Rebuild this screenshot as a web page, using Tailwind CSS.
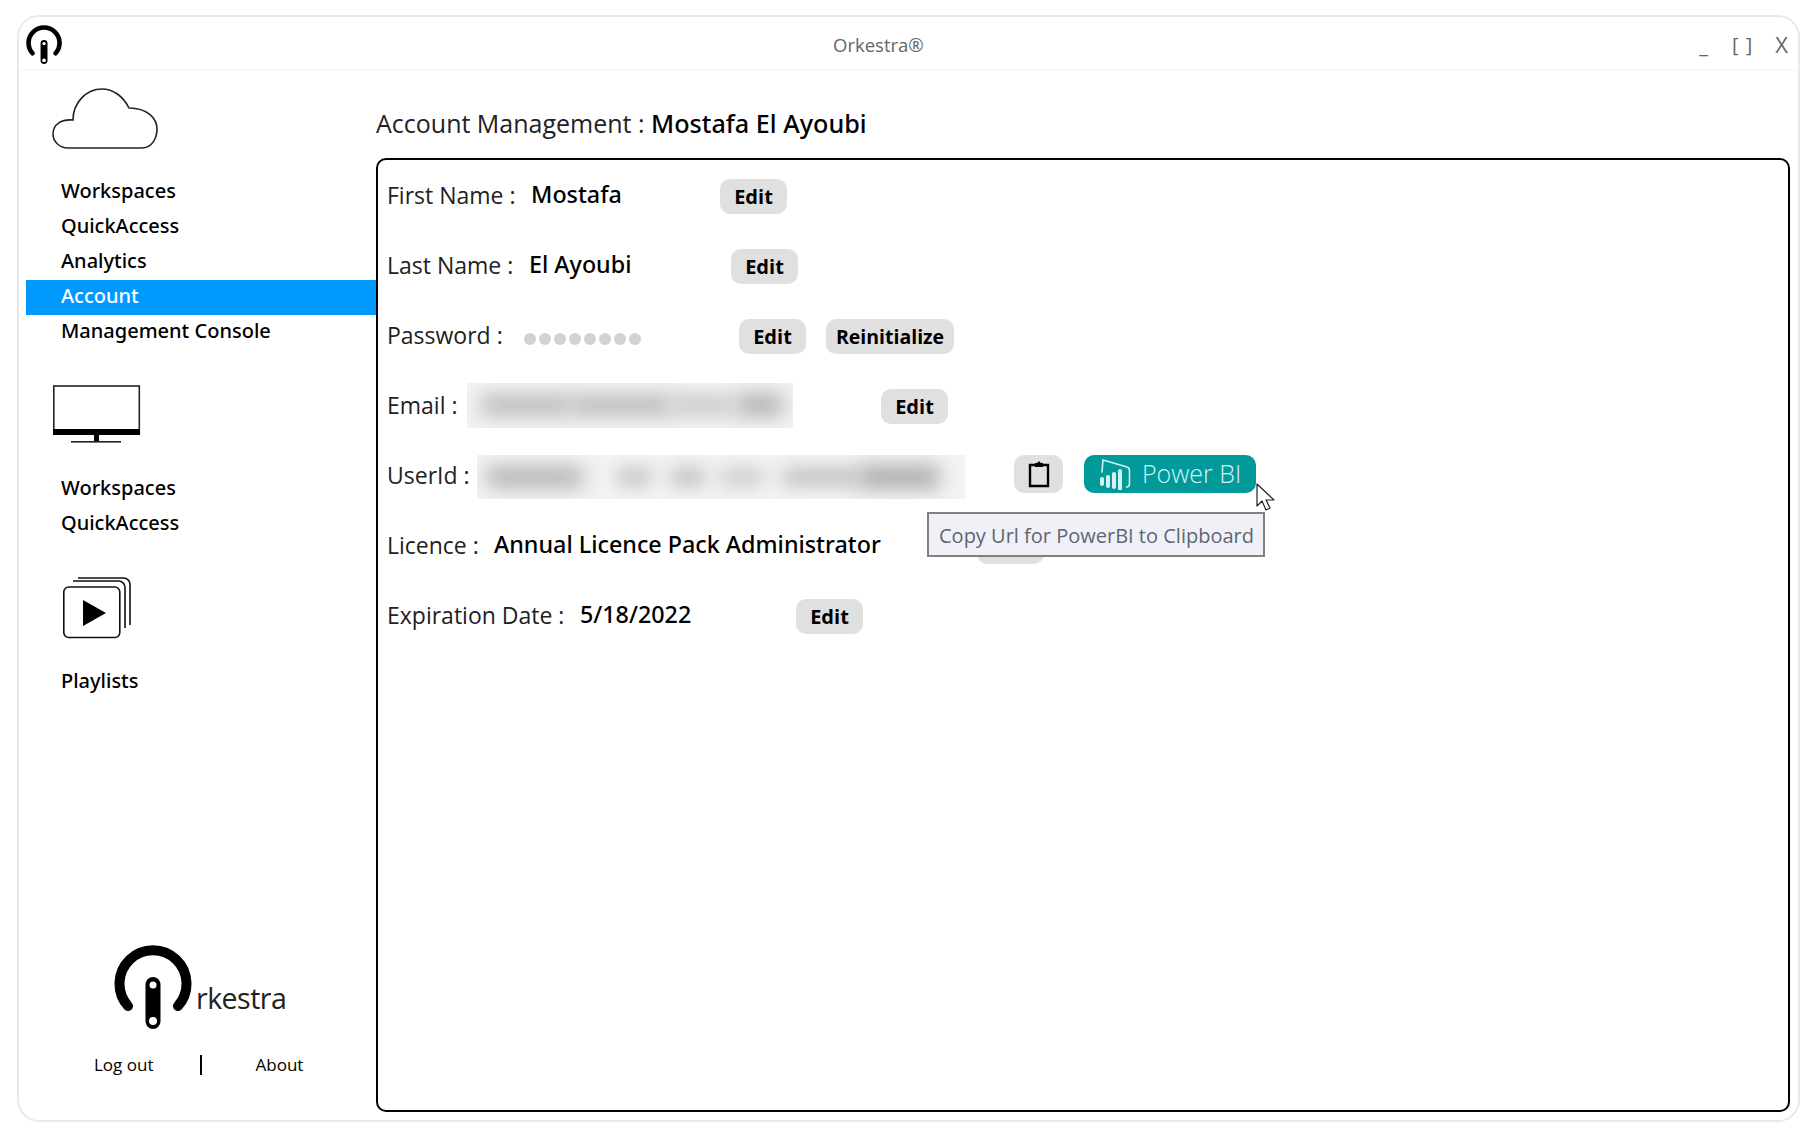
<!DOCTYPE html>
<html lang="en">
<head>
  <meta charset="UTF-8" />
  <title>Orkestra</title>
  <script src="https://cdn.jsdelivr.net/npm/@tailwindcss/browser@4"></script>
</head>
<body class="bg-white text-black font-['Open_Sans',sans-serif] overflow-hidden">

  <div class="w-[1816px] h-[1138px] pt-[15px] pl-[17px]">
    <!-- Window -->
    <div class="w-[1783px] h-[1107px] border-2 border-[#e9e9e9] rounded-[22px] flex flex-col bg-white">

      <!-- Title bar -->
      <div class="h-[54px] shrink-0 border-b-2 border-[#f9f9f9] flex items-center pl-[7px] relative">
        <svg class="w-[37px] h-[40px] mt-[3px]" viewBox="0 0 80 86">
          <path d="M14 61A33.5 33.5 0 1 1 64 61" fill="none" stroke="#000" stroke-width="10" stroke-linecap="round"/>
          <rect x="31.5" y="32" width="15" height="52" rx="7.5" fill="#000"/>
          <circle cx="39" cy="40" r="3.5" fill="#fff"/>
          <circle cx="39" cy="76" r="4" fill="#fff"/>
        </svg>
        <span class="ml-[770px] mt-[4px] text-[18.5px] text-[#666]">Orkestra®</span>
        <div class="ml-auto mr-[10px] mt-[3px] flex items-center text-[#666]">
          <span class="text-[20px] mr-[24px] mt-[2px]">_</span>
          <span class="text-[20px] mr-[22px] tracking-[1px]">[ ]</span>
          <span class="text-[22px]">X</span>
        </div>
      </div>

      <div class="flex flex-1 pl-[7px] min-h-0">
        <!-- Sidebar -->
        <aside class="w-[350px] shrink-0 flex flex-col text-[20px] font-['Noto_Sans',sans-serif] font-medium">
          <svg class="w-[110px] h-[66px] ml-[24px] mt-[15px] shrink-0" viewBox="0 0 110 66">
            <path d="M26 62H92C102 62 107 52 107 43C107 32 97 22 79 22C73 10 63 3 52 3C36 3 23 17 23 34C12 33 3 38 3 48C3 56 10 62 18 62Z" fill="none" stroke="#222" stroke-width="1.6"/>
          </svg>
          <nav class="mt-[23px] flex flex-col">
            <a class="h-[35px] flex items-center pl-[35px] pb-[4px]">Workspaces</a>
            <a class="h-[35px] flex items-center pl-[35px] pb-[4px]">QuickAccess</a>
            <a class="h-[35px] flex items-center pl-[35px] pb-[4px]">Analytics</a>
            <a class="h-[35px] flex items-center pl-[35px] pb-[4px] bg-[#0099ff] text-white">Account</a>
            <a class="h-[35px] flex items-center pl-[35px] pb-[4px]">Management Console</a>
          </nav>

          <svg class="w-[90px] h-[60px] ml-[26px] mt-[35px] shrink-0" viewBox="0 0 90 60">
            <rect x="1.8" y="1" width="85.5" height="48" fill="none" stroke="#222" stroke-width="1.6"/>
            <rect x="1" y="44" width="87" height="6" fill="#000"/>
            <rect x="42" y="50" width="5" height="6" fill="#000"/>
            <rect x="19" y="56" width="50" height="1.6" fill="#222"/>
          </svg>
          <nav class="mt-[26px] flex flex-col">
            <a class="h-[35px] flex items-center pl-[35px] pb-[2px]">Workspaces</a>
            <a class="h-[35px] flex items-center pl-[35px] pb-[2px]">QuickAccess</a>
          </nav>

          <svg class="w-[70px] h-[64px] ml-[36px] mt-[35px] shrink-0" viewBox="0 0 70 64">
            <rect x="1.8" y="11" width="56" height="50.5" rx="5" fill="none" stroke="#111" stroke-width="1.6"/>
            <path d="M11 5H57C60 5 63 8 63 11V52" fill="none" stroke="#111" stroke-width="1.6"/>
            <path d="M16 2H62C65 2 68 5 68 8V49" fill="none" stroke="#111" stroke-width="1.6"/>
            <path d="M21 24V50L44 37Z" fill="#000"/>
          </svg>
          <a class="h-[35px] flex items-center pl-[35px] pb-[2px] mt-[24px]">Playlists</a>

          <!-- Logo + footer links -->
          <div class="mt-auto mb-[41px] flex flex-col font-['Open_Sans',sans-serif] font-normal">
            <div class="flex items-end pl-[88px]">
              <svg class="w-[80px] h-[86px] shrink-0" viewBox="0 0 80 86">
                <path d="M14 61A33.5 33.5 0 1 1 64 61" fill="none" stroke="#000" stroke-width="10" stroke-linecap="round"/>
                <rect x="31.5" y="32" width="15" height="52" rx="7.5" fill="#000"/>
                <circle cx="39" cy="40" r="3.5" fill="#fff"/>
                <circle cx="39" cy="76" r="4" fill="#fff"/>
              </svg>
              <span class="text-[28.5px] leading-[38px] mb-[14px] ml-[2px] text-[#222] tracking-[-0.5px]">rkestra</span>
            </div>
            <div class="flex items-center mt-[20px] text-[17px] h-[28px]">
              <span class="ml-[68px] w-[106px]">Log out</span>
              <span class="w-[1.5px] h-[20px] bg-black"></span>
              <span class="ml-[54px]">About</span>
            </div>
          </div>
        </aside>

        <!-- Main -->
        <main class="flex-1 flex flex-col pr-[8px] min-w-0 mb-[8px]">
          <h1 class="h-[87px] shrink-0 flex items-center text-[25px] font-normal text-[#222] pt-[18px]">
            Account Management :&nbsp;<span class="text-black text-[25.2px] font-medium font-['Noto_Sans',sans-serif]">Mostafa El Ayoubi</span>
          </h1>

          <div class="flex-1 border-2 border-black rounded-[10px] relative text-[23px] pl-[9px] pt-px text-[#222]">
            <!-- First name -->
            <div class="h-[70px] flex items-center">
              <span class="w-[144px] -mt-[1px]">First Name :</span>
              <span class="w-[189px] -mt-[3px] text-[23.3px] text-black font-medium font-['Noto_Sans',sans-serif]">Mostafa</span>
              <button class="w-[67px] h-[35px] pt-[2px] rounded-[10px] bg-[#e0e0e0] text-[20px] font-bold text-black">Edit</button>
            </div>
            <!-- Last name -->
            <div class="h-[70px] flex items-center">
              <span class="w-[142px] -mt-[1px]">Last Name :</span>
              <span class="w-[202px] -mt-[3px] text-[23.3px] text-black font-medium font-['Noto_Sans',sans-serif]">El Ayoubi</span>
              <button class="w-[67px] h-[35px] pt-[2px] rounded-[10px] bg-[#e0e0e0] text-[20px] font-bold text-black">Edit</button>
            </div>
            <!-- Password -->
            <div class="h-[70px] flex items-center">
              <span class="w-[137px] -mt-[1px]">Password :</span>
              <div class="w-[215px] flex gap-[3px] mt-[6px]">
                <i class="w-[12px] h-[12px] rounded-full bg-[#d2d2d2]"></i>
                <i class="w-[12px] h-[12px] rounded-full bg-[#d2d2d2]"></i>
                <i class="w-[12px] h-[12px] rounded-full bg-[#d2d2d2]"></i>
                <i class="w-[12px] h-[12px] rounded-full bg-[#d2d2d2]"></i>
                <i class="w-[12px] h-[12px] rounded-full bg-[#d2d2d2]"></i>
                <i class="w-[12px] h-[12px] rounded-full bg-[#d2d2d2]"></i>
                <i class="w-[12px] h-[12px] rounded-full bg-[#d2d2d2]"></i>
                <i class="w-[12px] h-[12px] rounded-full bg-[#d2d2d2]"></i>
              </div>
              <button class="w-[67px] h-[35px] pt-[2px] rounded-[10px] bg-[#e0e0e0] text-[20px] font-bold text-black">Edit</button>
              <button class="w-[128px] h-[35px] pt-[2px] ml-[20px] rounded-[10px] bg-[#e0e0e0] text-[19.5px] font-bold text-black">Reinitialize</button>
            </div>
            <!-- Email -->
            <div class="h-[70px] flex items-center">
              <span class="w-[80px] -mt-[1px]">Email :</span>
              <div class="w-[326px] h-[45px] -mt-[2px] bg-[#f3f3f3] overflow-hidden flex items-center pl-[14px]">
                <i class="w-[90px] h-[20px] bg-[#b8b8b8] blur-[10px]"></i>
                <i class="w-[100px] h-[20px] bg-[#b8b8b8] blur-[10px]"></i>
                <i class="w-[62px] h-[18px] bg-[#c4c4c4] blur-[10px]"></i>
                <i class="w-[46px] h-[22px] ml-[4px] bg-[#b0b0b0] blur-[10px]"></i>
              </div>
              <button class="w-[67px] h-[35px] pt-[2px] ml-[88px] rounded-[10px] bg-[#e0e0e0] text-[20px] font-bold text-black">Edit</button>
            </div>
            <!-- UserId -->
            <div class="h-[70px] flex items-center">
              <span class="w-[90px] -mt-[1px]">UserId :</span>
              <div class="w-[488px] h-[44px] mt-[1px] bg-[#f3f3f3] overflow-hidden flex items-center pl-[10px]">
                <i class="w-[96px] h-[20px] bg-[#b0b0b0] blur-[10px]"></i>
                <i class="w-[34px] h-[16px] ml-[34px] bg-[#c0c0c0] blur-[9px]"></i>
                <i class="w-[34px] h-[16px] ml-[20px] bg-[#bcbcbc] blur-[9px]"></i>
                <i class="w-[42px] h-[16px] ml-[16px] bg-[#c8c8c8] blur-[9px]"></i>
                <i class="w-[76px] h-[16px] ml-[20px] bg-[#bcbcbc] blur-[9px]"></i>
                <i class="w-[80px] h-[22px] bg-[#a8a8a8] blur-[10px]"></i>
              </div>
              <button class="w-[49px] h-[38px] ml-[49px] -mt-[5px] rounded-[10px] bg-[#e0e0e0] flex items-center justify-center">
                <svg class="w-[24px] h-[28px]" viewBox="0 0 24 28">
                  <path d="M8 5H3V26H21V5H16" fill="none" stroke="#000" stroke-width="2.4"/>
                  <path d="M8 7V3H10.5C10.5 1 13.5 1 13.5 3H16V7Z" fill="#000"/>
                </svg>
              </button>
              <button class="w-[172px] h-[38px] ml-[21px] -mt-[5px] rounded-[10px] bg-[#009a9a] flex items-center pl-[15px] text-[25px] text-[#d6f1f1]">
                <svg class="w-[32px] h-[32px] shrink-0" viewBox="0 0 32 32">
                  <path d="M3 14L4 2L28 9C30 9.5 30.5 11 30.5 13V26C30.5 28 29.5 29 27.5 29" fill="none" stroke="#d6f1f1" stroke-width="1.6" stroke-linecap="round"/>
                  <rect x="1" y="19" width="4" height="9" rx="2" fill="#d6f1f1"/>
                  <rect x="7" y="17" width="4" height="13" rx="2" fill="#d6f1f1"/>
                  <rect x="13" y="14" width="4" height="17" rx="2" fill="#d6f1f1"/>
                  <rect x="19" y="11" width="4" height="22" rx="2" fill="#d6f1f1"/>
                </svg>
                <span class="ml-[11px] font-light leading-none">Power BI</span>
              </button>
            </div>
            <!-- Licence -->
            <div class="h-[70px] flex items-center">
              <span class="w-[107px] -mt-[1px]">Licence :</span>
              <span class="w-[483px] -mt-[3px] whitespace-nowrap text-[23.3px] text-black font-medium font-['Noto_Sans',sans-serif]">Annual Licence Pack Administrator</span>
              <button class="w-[67px] h-[35px] rounded-[10px] bg-[#e0e0e0]"></button>
            </div>
            <!-- Expiration -->
            <div class="h-[70px] flex items-center">
              <span class="w-[193px] -mt-[1px]">Expiration Date :</span>
              <span class="w-[216px] -mt-[3px] text-[23.3px] text-black font-medium font-['Noto_Sans',sans-serif]">5/18/2022</span>
              <button class="w-[67px] h-[35px] pt-[2px] rounded-[10px] bg-[#e0e0e0] text-[20px] font-bold text-black">Edit</button>
            </div>

            <!-- Tooltip over the Licence row -->
            <div class="absolute left-[549px] top-[352px] w-[338px] h-[45px] pt-[2px] bg-[#f0f1f8] border-2 border-[#808080] flex items-center pl-[10px] text-[20px] text-[#5f6570] whitespace-nowrap">Copy Url for PowerBI to Clipboard</div>
            <!-- Mouse pointer -->
            <svg class="absolute left-[878px] top-[323px] w-[20px] h-[28px]" viewBox="0 0 20 28">
              <path d="M1 1V23L6 18L10 27L14 25L10 17H18Z" fill="#fff" stroke="#222" stroke-width="1.2" stroke-linejoin="round"/>
            </svg>
          </div>
        </main>
      </div>
    </div>
  </div>

</body>
</html>
